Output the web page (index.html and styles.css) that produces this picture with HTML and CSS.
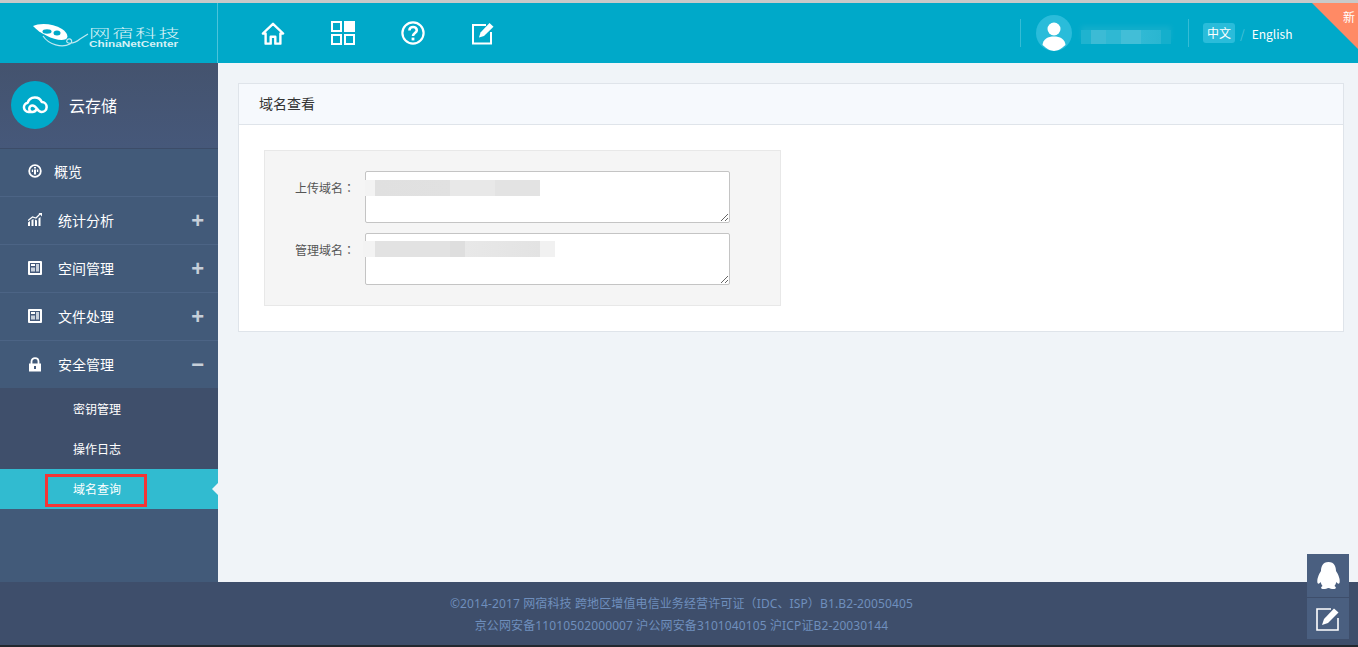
FILE: index.html
```html
<!DOCTYPE html>
<html lang="zh-CN">

<head>
    <meta charset="UTF-8">
    <meta name="viewport" content="width=device-width, initial-scale=1.0">
    <title>域名查看</title>
    <link rel="stylesheet" href="styles.css">
</head>

<body>
    <header class="topbar">
        <div class="logo">
            <svg class="logo-mark" width="56" height="26" viewBox="0 0 56 26">
                <path d="M0 2 C6 -1 20 -1 29 5 C35 9 36 14 32 15.500 C24 18 7 10 0 2 Z" fill="#fff" />
                <ellipse cx="14" cy="7.500" rx="4.500" ry="2.200" fill="#00a9c9" />
                <ellipse cx="24" cy="9" rx="3.500" ry="2.500" fill="#00a9c9" />
                <path d="M10 12 C16 21 29 24 37 20 C41 17 37 13 34 16 C32 20 40 21 47 15 L55 10" fill="none" stroke="#bfe9f1" stroke-width="1.200" />
            </svg>
            <div class="logo-text">
                <span class="logo-cn">网宿科技</span>
                <span class="logo-en">ChinaNetCenter</span>
            </div>
        </div>
        <nav class="top-nav">
            <a class="top-icon">
                <svg width="24" height="25" viewBox="0 0 26 26" fill="none" stroke="#fff" stroke-width="2.600" stroke-linejoin="round">
                    <path d="M2 13 L13 2.500 L24 13 L21 13 L21 24 L15.500 24 L15.500 16.500 L10.500 16.500 L10.500 24 L5 24 L5 13 Z" />
                </svg>
            </a>
            <a class="top-icon">
                <svg width="24" height="24" viewBox="0 0 24 24" fill="none" stroke="#fff" stroke-width="2">
                    <rect x="1" y="1" width="9" height="9" />
                    <rect x="13" y="0" width="11" height="11" fill="#fff" stroke="none" />
                    <rect x="1" y="14" width="9" height="9" />
                    <rect x="14" y="14" width="9" height="9" />
                </svg>
            </a>
            <a class="top-icon">
                <svg width="24" height="24" viewBox="0 0 24 24" fill="none" stroke="#fff" stroke-width="2.200">
                    <circle cx="12" cy="12" r="10.600" />
                    <path d="M8.400 9.400 C8.400 4.800 15.800 5 15.800 9.200 C15.800 12 12 12 12 15" stroke-width="2.600" />
                    <rect x="10.600" y="16.600" width="2.800" height="2.800" fill="#fff" stroke="none" />
                </svg>
            </a>
            <a class="top-icon">
                <svg width="24" height="24" viewBox="0 0 24 24" fill="none">
                    <path d="M15 4 L2 4 L2 22.500 L20 22.500 L20 11" stroke="#fff" stroke-width="2" />
                    <path d="M8 16.500 L9.500 11.500 L18.500 2 L22.500 5.800 L13 15 Z" fill="#fff" />
                </svg>
            </a>
        </nav>
        <div class="account">
            <span class="avatar">
                <svg width="36" height="36" viewBox="0 0 36 36" fill="#fff">
                    <circle cx="18" cy="14" r="6.500" />
                    <path d="M6.500 30 C7 24 12 21.500 18 21.500 C24 21.500 29 24 29.500 30 C26 33 22 36 18 36 C14 36 10 33 6.500 30 Z" />
                </svg>
            </span>
            <span class="user-blur"></span>
        </div>
        <div class="lang">
            <span class="lang-on">中文</span>
            <span class="lang-sep">/</span>
            <span>English</span>
        </div>
        <span class="new-flag"></span>
        <span class="new-text">新</span>
    </header>

    <div class="main">
        <aside class="sidebar">
            <div class="product">
                <span class="product-icon">
                    <svg class="cloud" width="26" height="20" viewBox="0 0 26 20" fill="none" stroke="#fff" stroke-width="2.500" stroke-linecap="round" stroke-linejoin="round">
                        <path d="M8 18 H6.500 A4.700 4.700 0 0 1 5.700 8.700 A7.500 7.500 0 0 1 19.800 8 A5 5 0 0 1 19.500 18 C15 18 15 11.500 10.500 11.500 A3.250 3.250 0 0 0 10.500 18 C13 18 14 16.500 15 15" />
                    </svg>
                </span>
                <span class="product-name">云存储</span>
            </div>
            <ul class="menu">
                <li class="menu-item first">
                    <svg class="menu-icon" width="14" height="14" viewBox="0 0 14 14">
                        <circle cx="7" cy="7" r="5.800" fill="none" stroke="#fff" stroke-width="1.800" />
                        <rect x="6" y="5.500" width="2" height="5" fill="#fff" />
                        <rect x="3.800" y="5.500" width="1.300" height="2.500" fill="#fff" />
                        <rect x="8.900" y="5.500" width="1.300" height="2.500" fill="#fff" />
                        <rect x="6" y="3" width="2" height="1.500" fill="#fff" />
                    </svg>
                    <span class="menu-text">概览</span>
                </li>
                <li class="menu-item">
                    <svg class="menu-icon" width="14" height="14" viewBox="0 0 14 14" fill="#fff">
                        <path d="M0 13 L0 9.500 L2 8 L2 13 Z M3.500 13 L3.500 7 L5.500 6 L5.500 13 Z M7 13 L7 6.500 L9 7.500 L9 13 Z M10.500 13 L10.500 5.500 L12.500 4 L12.500 13 Z" />
                        <path d="M0 7.500 L4.500 4 L8 5 L12 1" fill="none" stroke="#fff" stroke-width="1.200" />
                        <path d="M10.500 0 L14 0 L14 3.500 Z" fill="#fff" />
                    </svg>
                    <span class="menu-text">统计分析</span>
                    <span class="menu-sign">+</span>
                </li>
                <li class="menu-item">
                    <svg class="menu-icon" width="14" height="14" viewBox="0 0 14 14">
                        <rect x="0" y="0" width="14" height="14" rx="1" fill="#fff" />
                        <rect x="2" y="2" width="10" height="10" fill="#44597a" />
                        <rect x="3" y="3" width="4" height="2" fill="#fff" />
                        <rect x="3" y="6.500" width="4" height="4" fill="#c9d1dc" />
                        <rect x="8" y="3" width="3" height="7.500" fill="#c9d1dc" />
                    </svg>
                    <span class="menu-text">空间管理</span>
                    <span class="menu-sign">+</span>
                </li>
                <li class="menu-item">
                    <svg class="menu-icon" width="14" height="14" viewBox="0 0 14 14">
                        <rect x="0" y="0" width="14" height="14" rx="1" fill="#fff" />
                        <rect x="2" y="2" width="10" height="10" fill="#44597a" />
                        <rect x="3" y="3" width="4" height="2" fill="#fff" />
                        <rect x="3" y="6.500" width="4" height="4" fill="#c9d1dc" />
                        <rect x="8" y="3" width="3" height="7.500" fill="#c9d1dc" />
                    </svg>
                    <span class="menu-text">文件处理</span>
                    <span class="menu-sign">+</span>
                </li>
                <li class="menu-item">
                    <svg class="menu-icon" width="14" height="15" viewBox="0 0 14 15">
                        <path d="M3.500 7 L3.500 4.500 C3.500 0 10.500 0 10.500 4.500 L10.500 7" fill="none" stroke="#fff" stroke-width="1.800" />
                        <rect x="1" y="6.500" width="12" height="8" fill="#fff" />
                        <rect x="6" y="9" width="2" height="3" fill="#44597a" />
                    </svg>
                    <span class="menu-text">安全管理</span>
                    <span class="menu-sign">−</span>
                </li>
            </ul>
            <ul class="submenu">
                <li class="sub-item">密钥管理</li>
                <li class="sub-item">操作日志</li>
                <li class="sub-item active"><span class="red-box">域名查询</span></li>
            </ul>
        </aside>

        <section class="content">
            <div class="card">
                <div class="card-head">域名查看</div>
                <div class="card-body">
                    <div class="well">
                        <div class="field">
                            <label class="field-label">上传域名<span class="colon" lang="zh-TW">：</span></label>
                            <div class="field-box">
                                <textarea class="field-input"></textarea>
                                <span class="blur blur-one"></span>
                            </div>
                        </div>
                        <div class="field">
                            <label class="field-label">管理域名<span class="colon" lang="zh-TW">：</span></label>
                            <div class="field-box">
                                <textarea class="field-input"></textarea>
                                <span class="blur blur-two"></span>
                            </div>
                        </div>
                    </div>
                </div>
            </div>
        </section>
    </div>

    <footer class="footer">
        <p>©2014-2017 网宿科技 跨地区增值电信业务经营许可证（IDC、ISP）B1.B2-20050405</p>
        <p>京公网安备11010502000007 沪公网安备3101040105 沪ICP证B2-20030144</p>
    </footer>
    <div class="bottom-edge"></div>

    <div class="float-tools">
        <a class="float-btn">
            <svg width="25" height="28" viewBox="0 0 24 28" fill="#fff">
                <path d="M12 0 C18 0 19.500 5 19.500 9 C21.500 12 24 17 23 21 C22 22.500 20.500 21 19.800 20 C19.500 22 18.500 23 18 24 C20 25 20 27 17 27 C15 27 13.500 26.500 12 26 C10.500 26.500 9 27 7 27 C4 27 4 25 6 24 C5.500 23 4.500 22 4.200 20 C3.500 21 2 22.500 1 21 C0 17 2.500 12 4.500 9 C4.500 5 6 0 12 0 Z" />
            </svg>
        </a>
        <a class="float-btn">
            <svg width="26" height="26" viewBox="0 0 26 26" fill="none">
                <path d="M16 3 L2 3 L2 24 L23 24 L23 12" stroke="#fff" stroke-width="1.600" />
                <path d="M7 19 L9 13 L19 2.500 L23.500 6.500 L13 17 Z" fill="#fff" />
            </svg>
        </a>
    </div>
</body>

</html>
```

FILE: styles.css
```css
html,
body {
    width: 100%;
    height: 100%;
    margin: 0;
    padding: 0;
    overflow: hidden;
}

body {
    display: flex;
    flex-direction: column;
    background-color: #f0f4f8;
    font-family: "Noto Sans CJK SC", "Noto Sans", sans-serif;
    font-size: 12px;
    color: #333;
}

ul {
    margin: 0;
    padding: 0;
    list-style: none;
}

/* 顶部 */
.topbar {
    position: relative;
    flex: none;
    height: 60px;
    display: flex;
    align-items: center;
    overflow: hidden;
    border-top: 3px solid #c9c9c9;
    background-color: #00a9c9;
    color: #fff;
}

.logo {
    width: 217px;
    height: 60px;
    flex: none;
    display: flex;
    align-items: center;
    border-right: 1px solid #4cc3da;
}

.logo-mark {
    margin-left: 33px;
    margin-top: 8px;
}

.logo-text {
    width: 91px;
    display: flex;
    flex-direction: column;
    margin-top: 8px;
    color: #d5f1f6;
    white-space: nowrap;
}

.logo-cn {
    font-size: 12px;
    line-height: 14px;
    letter-spacing: 1px;
    font-weight: 300;
    transform: scaleX(1.780);
    transform-origin: left center;
}

.logo-en {
    font-family: "Liberation Sans", sans-serif;
    font-size: 9px;
    line-height: 8px;
    font-weight: bold;
    transform: scaleX(1.310);
    transform-origin: left center;
}

.top-nav {
    display: flex;
    margin-left: 20px;
}

.top-icon {
    width: 70px;
    height: 30px;
    display: flex;
    align-items: center;
    justify-content: center;
}

.account {
    margin-left: auto;
    width: 167px;
    height: 28px;
    display: flex;
    align-items: center;
    border-left: 1px solid #35bcd5;
    border-right: 1px solid #35bcd5;
}

.avatar {
    width: 36px;
    height: 36px;
    margin-left: 15px;
    flex: none;
    overflow: hidden;
    border-radius: 50%;
    background-color: #2abcda;
}

.user-blur {
    width: 90px;
    height: 14px;
    margin-left: 9px;
    margin-top: 8px;
    box-shadow: 0 -4px 5px #12aecb;
    background: linear-gradient(90deg, #1fb3cf 0, #1fb3cf 10px, #3cbbd5 10px, #3cbbd5 25px, #2fb8d3 25px, #2fb8d3 40px, #42bed7 40px, #42bed7 60px, #30b9d4 60px, #2ab6d1 80px, #14afcc 80px);
}

.lang {
    width: 154px;
    margin-right: 15px;
    padding-left: 14px;
    box-sizing: border-box;
    display: flex;
    align-items: center;
    font-size: 12px;
}

.lang-on {
    width: 32px;
    height: 20px;
    line-height: 20px;
    text-align: center;
    border-radius: 3px;
    background-color: #2abcda;
}

.lang-sep {
    margin: 0 7px 0 5px;
    color: #4cc3da;
}

.new-flag {
    position: absolute;
    top: 0;
    right: 0;
    width: 46px;
    height: 46px;
    background-color: #ff8a65;
    clip-path: polygon(0 0, 100% 0, 100% 100%);
}

.new-text {
    position: absolute;
    top: 5px;
    right: 3px;
    font-size: 12px;
    line-height: 18px;
}

/* 主体 */
.main {
    flex: 1;
    min-height: 0;
    display: flex;
}

.sidebar {
    width: 218px;
    flex: none;
    background-color: #425a79;
    color: #fff;
}

.product {
    height: 86px;
    box-sizing: border-box;
    padding: 0 0 1px 11px;
    display: flex;
    align-items: center;
    border-bottom: 1px solid #3c4c68;
    background: linear-gradient(#44536e, #46587a);
}

.product-icon {
    width: 48px;
    height: 48px;
    flex: none;
    display: flex;
    align-items: center;
    justify-content: center;
    border-radius: 50%;
    background-color: #00a9c9;
}

.cloud {
    margin-top: -3px;
}

.product-name {
    margin-left: 10px;
    font-size: 16px;
}

.menu-item {
    height: 48px;
    box-sizing: border-box;
    padding: 0 0 2px 28px;
    display: flex;
    align-items: center;
    border-bottom: 1px solid #4c6485;
    font-size: 14px;
}

.menu-item.first {
    padding-bottom: 4px;
}

.menu-item:last-child {
    height: 47px;
    padding-bottom: 1px;
    border-bottom: 0;
}

.menu-text {
    margin-left: 16px;
}

.first .menu-text {
    margin-left: 12px;
}

.menu-sign {
    margin-left: auto;
    margin-right: 14px;
    margin-top: 2px;
    color: #c6cfd9;
    font-family: "Liberation Sans", sans-serif;
    font-size: 22px;
    font-weight: bold;
    line-height: 22px;
}

.submenu {
    background-color: #3f4f6b;
}

.sub-item {
    height: 40px;
    padding-left: 73px;
    line-height: 40px;
    font-size: 12px;
}

.sub-item:first-child {
    height: 41px;
    line-height: 41px;
}

.sub-item.active {
    position: relative;
    padding-left: 45px;
    display: flex;
    align-items: center;
    background-color: #31bbd0;
}

.sub-item.active::after {
    content: "";
    position: absolute;
    right: 0;
    top: 14px;
    border: 6px solid transparent;
    border-right-color: #f0f4f8;
    border-left-width: 0;
}

.red-box {
    width: 102px;
    height: 33px;
    margin-top: 3px;
    box-sizing: border-box;
    padding-left: 25px;
    line-height: 24px;
    border: 3px solid #f53535;
}

.content {
    flex: 1;
    min-width: 0;
    padding: 20px 14px 0 20px;
}

.card {
    border: 1px solid #dfe4ea;
    background-color: #fff;
}

.card-head {
    height: 40px;
    padding-left: 20px;
    line-height: 39px;
    font-size: 14px;
    color: #333;
    background-color: #f6f9fd;
    border-bottom: 1px solid #dfe4ea;
}

.card-body {
    padding: 25px;
}

.well {
    width: 515px;
    padding: 20px 0;
    display: flex;
    flex-direction: column;
    gap: 10px;
    border: 1px solid #e8e8e8;
    background-color: #f5f5f5;
}

.field {
    display: flex;
}

.field-label {
    width: 90px;
    margin-right: 10px;
    padding-top: 8px;
    line-height: 18px;
    text-align: right;
    color: #555;
}

.colon {
    font-family: "Noto Sans CJK TC", sans-serif;
}

.field-box {
    position: relative;
    display: flex;
}

.field-input {
    width: 365px;
    height: 52px;
    margin: 0;
    padding: 4px 6px;
    box-sizing: border-box;
    border: 1px solid #c4c4c4;
    border-radius: 2px;
    background-color: #fff;
}

.blur {
    position: absolute;
    height: 16px;
}

.blur-one {
    left: 0;
    top: 9px;
    width: 175px;
    background: linear-gradient(90deg, #f3f3f3 0, #f3f3f3 10px, #e0e0e0 10px, #e1e1e1 85px, #e8e8e8 85px, #e8e8e8 130px, #e3e3e3 130px);
}

.blur-two {
    left: -2px;
    top: 8px;
    width: 192px;
    background: linear-gradient(90deg, #f3f3f3 0, #f3f3f3 12px, #e2e2e2 12px, #e2e2e2 87px, #dedede 87px, #dedede 102px, #e8e8e8 102px, #e3e3e3 177px, #f1f1f1 177px);
}

/* 底部 */
.footer {
    height: 63px;
    flex: none;
    box-sizing: border-box;
    padding: 11px 0 0 5px;
    text-align: center;
    letter-spacing: 0.120px;
    color: #6f8fbd;
    background-color: #3e4e6b;
    font-family: "Noto Sans", "Noto Sans CJK SC", sans-serif;
}

.footer p {
    margin: 0;
    line-height: 22px;
}

.bottom-edge {
    height: 2px;
    flex: none;
    background-color: #22282f;
}

.float-tools {
    position: fixed;
    right: 9px;
    bottom: 8px;
    width: 42px;
    display: flex;
    flex-direction: column;
}

.float-btn {
    height: 43px;
    display: flex;
    align-items: center;
    justify-content: center;
    background-color: #4a5f80;
}

.float-btn+.float-btn {
    height: 41px;
    border-top: 1px solid #3e4e6b;
}
```
